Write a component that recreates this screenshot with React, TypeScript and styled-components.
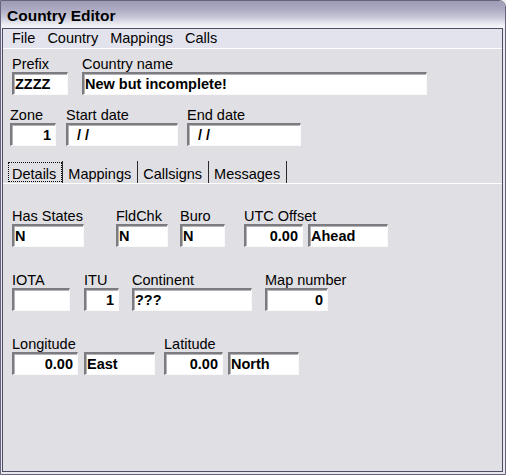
import React from 'react';
import styled, { createGlobalStyle } from 'styled-components';

/** ____________________________________________________    GLOBAL
 * */
const GlobalStyle = createGlobalStyle`
    html, body {
        margin: 0;
        padding: 0;
        background: #ededf0;
    }
    body {
        font-family: "Liberation Sans", Arial, sans-serif;
        color: #000;
    }
`;

/** ____________________________________________________    WINDOW FRAME
 * */
const Window = styled.div`
    box-sizing: border-box;
    width: 506px;
    height: 475px;
    display: flex;
    flex-direction: column;
    border: 1px solid #66647e;
    border-top-right-radius: 7px;
    padding: 0 2px 2px 1px;
    background: #e7e7ee;
    overflow: hidden;
`;

const TitleBar = styled.div`
    box-sizing: border-box;
    height: 27px;
    margin: 0 -2px 0 -1px;
    padding: 3px 0 0 6px;
    background: linear-gradient(to bottom, #9d9bb6 0%, #acaac2 30%, #c6c5d7 58%, #ebebf2 86%, #f6f6fa 100%);
    font: bold 15.5px/24px "Liberation Sans", Arial, sans-serif;
`;

const Frame = styled.div`
    flex: 1;
    display: flex;
    flex-direction: column;
    border: 1px solid #4e4d66;
    background: #e0dfe3;
`;

const MenuBar = styled.div`
    display: flex;
    gap: 12px;
    height: 19px;
    padding-left: 9px;
    background: #e3e3ed;
    border-bottom: 1px solid #fff;
    font-size: 14.5px;
    line-height: 19px;
`;

const Body = styled.div`
    flex: 1;
    display: flex;
    flex-direction: column;
    padding-top: 7px;
`;

/** ____________________________________________________    FIELDS
 * */
const Row = styled.div<{ $pl: number; $mt: number }>`
    display: flex;
    align-items: flex-start;
    padding-left: ${p => p.$pl}px;
    margin-top: ${p => p.$mt}px;
`;

const FieldBox = styled.div<{ $w: number; $ml: number }>`
    display: flex;
    flex-direction: column;
    width: ${p => p.$w}px;
    margin-left: ${p => p.$ml}px;
`;

const Label = styled.div`
    height: 16px;
    font-size: 14.5px;
    line-height: 16px;
    white-space: nowrap;
`;

const Input = styled.input<{ $right?: boolean }>`
    box-sizing: border-box;
    width: 100%;
    height: 23px;
    margin: 0;
    padding: ${p => (p.$right ? '0 4px 0 1px' : '0 4px 0 1px')};
    border-style: solid;
    border-width: 2px 1px 1px 2px;
    border-color: #7b7b80 #f9f9fb #f9f9fb #7b7b80;
    box-shadow: inset 1px 1px 0 #b4b4b8;
    background: #fff;
    font: bold 14.5px/19px "Liberation Sans", Arial, sans-serif;
    color: #000;
    text-align: ${p => (p.$right ? 'right' : 'left')};
    outline: none;
`;

type FieldProps = {
    label?: string
    value: string
    w: number
    ml?: number
    right?: boolean
}

const Field = ({label, value, w, ml = 0, right}: FieldProps) => (
    <FieldBox $w={w} $ml={ml}>
        <Label>{label}</Label>
        <Input $right={right} value={value} readOnly/>
    </FieldBox>
);

/** ____________________________________________________    TABS
 * */
const TabStrip = styled.div`
    display: flex;
    height: 22px;
    margin-top: 15px;
    padding-left: 4px;
    border-bottom: 1px solid #fff;
`;

const Tab = styled.div<{ $focused?: boolean }>`
    box-sizing: border-box;
    height: 22px;
    padding: 4px 6px 0 5px;
    border-right: 1px solid #2a2a2a;
    font-size: 14.5px;
    line-height: 18px;
    white-space: nowrap;
    outline: ${p => (p.$focused ? '1px dotted #000' : 'none')};
    outline-offset: -2px;
`;

const menus = ['File', 'Country', 'Mappings', 'Calls'];
const tabs = ['Details', 'Mappings', 'Callsigns', 'Messages'];

export default function App() {
    return (
        <>
            <GlobalStyle/>
            <Window>
                <TitleBar>Country Editor</TitleBar>
                <Frame>
                    <MenuBar>
                        {menus.map(m => <span key={m}>{m}</span>)}
                    </MenuBar>
                    <Body>
                        <Row $pl={9} $mt={0}>
                            <Field label="Prefix" value="ZZZZ" w={56}/>
                            <Field label="Country name" value="New but incomplete!" w={345} ml={14}/>
                        </Row>
                        <Row $pl={7} $mt={12}>
                            <Field label="Zone" value="1" w={46} right/>
                            <Field label="Start date" value="  / /" w={112} ml={10}/>
                            <Field label="End date" value="  / /" w={114} ml={9}/>
                        </Row>

                        <TabStrip>
                            {tabs.map((t, i) => <Tab key={t} $focused={i === 0}>{t}</Tab>)}
                        </TabStrip>

                        <Row $pl={9} $mt={24}>
                            <Field label="Has States" value="N" w={72}/>
                            <Field label="FldChk" value="N" w={52} ml={32}/>
                            <Field label="Buro" value="N" w={45} ml={12}/>
                            <Field label="UTC Offset" value="0.00" w={59} ml={19} right/>
                            <Field value="Ahead" w={80} ml={5}/>
                        </Row>
                        <Row $pl={9} $mt={25}>
                            <Field label="IOTA" value="" w={58}/>
                            <Field label="ITU" value="1" w={35} ml={14} right/>
                            <Field label="Continent" value="???" w={120} ml={13}/>
                            <Field label="Map number" value="0" w={63} ml={13} right/>
                        </Row>
                        <Row $pl={9} $mt={25}>
                            <Field label="Longitude" value="0.00" w={66} right/>
                            <Field value="East" w={71} ml={6}/>
                            <Field label="Latitude" value="0.00" w={59} ml={9} right/>
                            <Field value="North" w={71} ml={5}/>
                        </Row>
                    </Body>
                </Frame>
            </Window>
        </>
    );
}
